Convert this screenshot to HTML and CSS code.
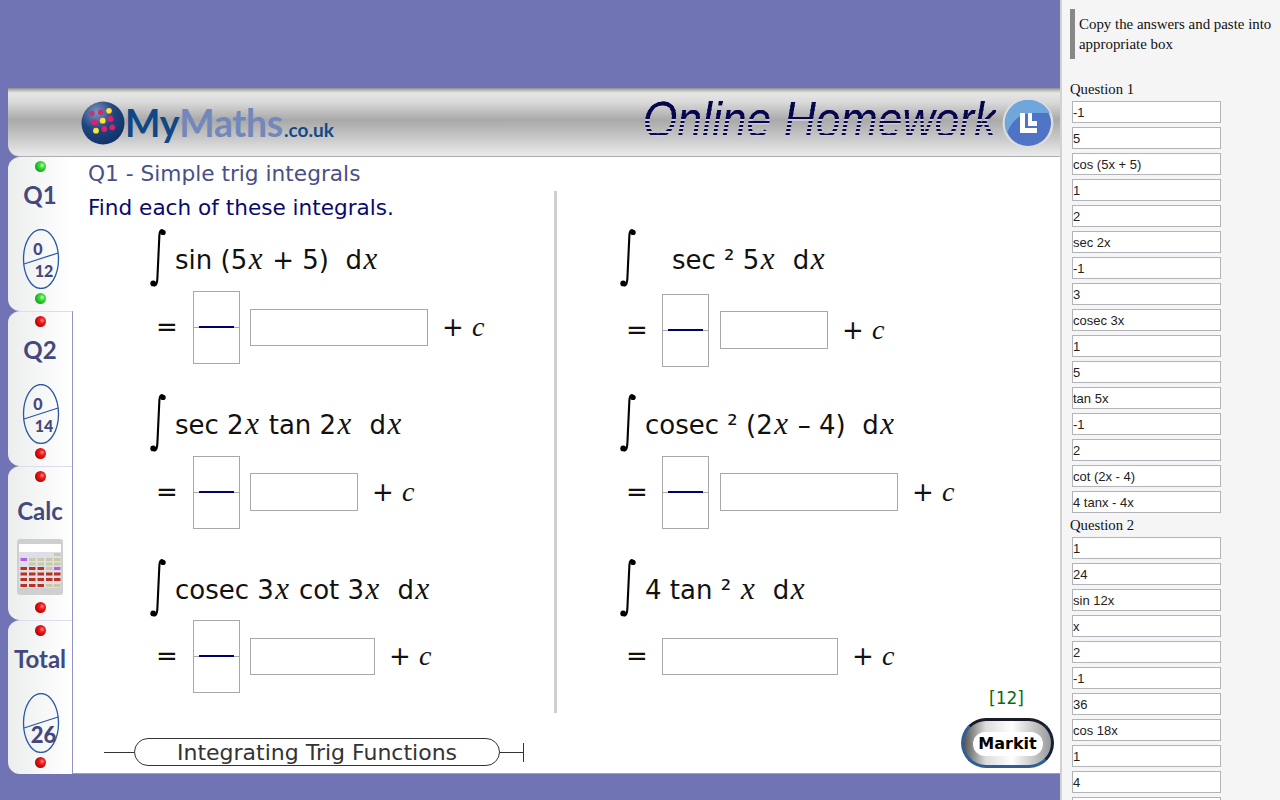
FILE: index.html
```html
<!DOCTYPE html>
<html lang="en">
<head>
<meta charset="utf-8">
<title>Online Homework</title>
<link rel="stylesheet" href="styles.css">
</head>
<body>
<svg class="defs" width="0" height="0" aria-hidden="true">
  <defs>
    <radialGradient id="ledRed" cx="0.65" cy="0.4" r="0.7"><stop offset="0" stop-color="#ff8a8a"/><stop offset="0.35" stop-color="#ee1c1c"/><stop offset="1" stop-color="#a80000"/></radialGradient>
    <radialGradient id="ledGreen" cx="0.65" cy="0.4" r="0.7"><stop offset="0" stop-color="#c8ffb8"/><stop offset="0.35" stop-color="#3fdc3a"/><stop offset="1" stop-color="#129a1c"/></radialGradient>
    <radialGradient id="ball" cx="0.35" cy="0.25" r="0.9"><stop offset="0" stop-color="#7f93bd"/><stop offset="0.45" stop-color="#1f4580"/><stop offset="1" stop-color="#0c2c60"/></radialGradient>
    <symbol id="integral" viewBox="0 0 16 60">
      <path d="M13.6 4.2C12.6 1 10 1.4 9.4 7L7.4 50C7 58 4.6 59 2.6 55.6" fill="none" stroke="#000" stroke-width="2.1"/>
      <circle cx="13" cy="4.4" r="2.7"/><circle cx="3.2" cy="55.4" r="2.9"/>
    </symbol>
    <symbol id="led-red" viewBox="0 0 11 11"><circle cx="5.5" cy="5.5" r="5.5" fill="url(#ledRed)"/></symbol>
    <symbol id="led-green" viewBox="0 0 11 11"><circle cx="5.5" cy="5.5" r="5.5" fill="url(#ledGreen)"/></symbol>
  </defs>
</svg>
<main class="main">
  <div class="stage">
    <header class="banner">
      <div class="logo">
        <svg class="logo-ball" viewBox="0 0 44 44" aria-hidden="true">
          <circle cx="22" cy="22" r="21.5" fill="url(#ball)"/>
          <circle cx="11" cy="12.3" r="2.6" fill="#b8386f"/><circle cx="19.7" cy="11.3" r="2.7" fill="#c92c70"/><circle cx="28" cy="9.7" r="2.8" fill="#ffe23a"/>
          <circle cx="13.7" cy="21.3" r="2.9" fill="#e0206a"/><circle cx="21.7" cy="19.7" r="2.9" fill="#ffe23a"/><circle cx="29.7" cy="18" r="2.9" fill="#e0206a"/>
          <circle cx="15" cy="29.7" r="2.9" fill="#ffe23a"/><circle cx="23.3" cy="28" r="2.9" fill="#e0206a"/><circle cx="31.3" cy="26.3" r="2.9" fill="#e0206a"/>
        </svg>
        <span class="logo-my">My</span><span class="logo-maths">Maths</span><span class="logo-tld">.co.uk</span>
      </div>
      <div class="brand">
        <span class="brand-text">Online Homework</span>
        <svg class="brand-badge" viewBox="0 0 52 52" aria-hidden="true">
          <circle cx="26" cy="26" r="25.5" fill="#dcdcdc"/>
          <circle cx="26" cy="26" r="23" fill="#4f74c6"/>
          <path d="M26 3A23 23 0 0 0 5 36C10 24 18 16 30 16L48 16A23 23 0 0 0 26 3Z" fill="#6fa6dc"/>
          <path d="M18 16H23V31H35V36H18ZM26 16H30V24H35V29H26Z" fill="#fff"/>
        </svg>
      </div>
    </header>
    <div class="board">
      <nav class="tabs">
        <div class="tab tab-active">
          <svg class="led"><use href="#led-green"/></svg>
          <div class="tab-label">Q1</div>
          <svg class="oval" viewBox="0 0 38 60"><ellipse cx="19" cy="30" rx="17.5" ry="29.5" class="oval-ring"/><path d="M2 35L36 24" class="oval-ring"/><text x="16" y="26" class="oval-text">0</text><text x="22" y="48" class="oval-text">12</text></svg>
          <svg class="led led-end"><use href="#led-green"/></svg>
        </div>
        <div class="tab">
          <svg class="led"><use href="#led-red"/></svg>
          <div class="tab-label">Q2</div>
          <svg class="oval" viewBox="0 0 38 60"><ellipse cx="19" cy="30" rx="17.5" ry="29.5" class="oval-ring"/><path d="M2 35L36 24" class="oval-ring"/><text x="16" y="26" class="oval-text">0</text><text x="22" y="48" class="oval-text">14</text></svg>
          <svg class="led led-end"><use href="#led-red"/></svg>
        </div>
        <div class="tab tab-calc">
          <svg class="led"><use href="#led-red"/></svg>
          <div class="tab-label tab-label-calc">Calc</div>
          <svg class="calc" viewBox="0 0 46 56" aria-hidden="true">
            <rect width="46" height="56" rx="3" fill="#cfcfd2"/>
            <rect x="2" y="5" width="42" height="8" fill="#fff"/>
            <rect x="2" y="13" width="42" height="36" fill="#dedee8"/>
            <g fill="#c9c9a4">
              <rect x="37" y="14" width="6.5" height="3"/>
              <rect x="12" y="19" width="6.5" height="3"/><rect x="20.5" y="19" width="6.5" height="3"/><rect x="29" y="19" width="6.5" height="3"/><rect x="37" y="19" width="6.5" height="3"/>
              <rect x="12" y="23.500" width="6.5" height="3"/><rect x="20.5" y="23.500" width="6.5" height="3"/><rect x="29" y="23.500" width="6.5" height="3"/><rect x="37" y="23.500" width="6.5" height="3"/>
              <rect x="29" y="28" width="6.5" height="3"/><rect x="29" y="45" width="6.5" height="3"/><rect x="37" y="45" width="6.5" height="3"/>
            </g>
            <g fill="#b8321f">
              <rect x="3.500" y="28" width="6.5" height="3"/><rect x="12" y="28" width="6.5" height="3"/><rect x="20.5" y="28" width="6.5" height="3"/>
              <rect x="3.500" y="33.500" width="6.5" height="3"/><rect x="12" y="33.500" width="6.5" height="3"/><rect x="20.5" y="33.500" width="6.5" height="3"/><rect x="29" y="33.500" width="6.5" height="3"/><rect x="37" y="33.500" width="6.5" height="3"/>
              <rect x="3.500" y="39" width="6.5" height="3"/><rect x="12" y="39" width="6.5" height="3"/><rect x="20.5" y="39" width="6.5" height="3"/><rect x="29" y="39" width="6.5" height="3"/><rect x="37" y="39" width="6.5" height="3"/>
              <rect x="3.500" y="45" width="6.5" height="3"/><rect x="12" y="45" width="6.5" height="3"/><rect x="20.5" y="45" width="6.5" height="3"/>
            </g>
            <g fill="#b45ce8"><rect x="3.500" y="19" width="6.5" height="3"/><rect x="37" y="28" width="6.5" height="3"/></g>
          </svg>
          <svg class="led led-calc-end"><use href="#led-red"/></svg>
        </div>
        <div class="tab tab-total">
          <svg class="led"><use href="#led-red"/></svg>
          <div class="tab-label">Total</div>
          <svg class="oval" viewBox="0 0 38 60"><ellipse cx="19" cy="30" rx="17.5" ry="29.5" class="oval-ring"/><path d="M2 35L36 24" class="oval-ring"/><text x="21.500" y="50" class="oval-text oval-text-lg">26</text></svg>
          <svg class="led led-end"><use href="#led-red"/></svg>
        </div>
      </nav>
      <section class="content">
        <div class="columns">
          <div class="col col-left">
            <h1 class="q-title">Q1 - Simple trig integrals</h1>
            <p class="q-intro">Find each of these integrals.</p>
            <div class="problem">
              <div class="expr"><svg class="int"><use href="#integral"/></svg><span class="expr-text">sin (5<i>x</i> + 5)&nbsp; d<i>x</i></span></div>
              <div class="answer"><span class="eq">=</span><span class="frac"><span class="frac-bar"></span></span><span class="box box-short w178"></span><span class="plus">+ <i>c</i></span></div>
            </div>
            <div class="problem">
              <div class="expr"><svg class="int"><use href="#integral"/></svg><span class="expr-text">sec 2<i>x</i> tan 2<i>x</i>&nbsp; d<i>x</i></span></div>
              <div class="answer"><span class="eq">=</span><span class="frac"><span class="frac-bar"></span></span><span class="box w108"></span><span class="plus">+ <i>c</i></span></div>
            </div>
            <div class="problem problem-last">
              <div class="expr"><svg class="int"><use href="#integral"/></svg><span class="expr-text">cosec 3<i>x</i> cot 3<i>x</i>&nbsp; d<i>x</i></span></div>
              <div class="answer answer-up"><span class="eq">=</span><span class="frac"><span class="frac-bar"></span></span><span class="box box-short w125"></span><span class="plus">+ <i>c</i></span></div>
            </div>
          </div>
          <div class="divider"></div>
          <div class="col col-right">
            <div class="problem">
              <div class="expr"><svg class="int"><use href="#integral"/></svg><span class="expr-text expr-indent">sec ² 5<i>x</i>&nbsp; d<i>x</i></span></div>
              <div class="answer answer-down"><span class="eq">=</span><span class="frac"><span class="frac-bar"></span></span><span class="box w108"></span><span class="plus">+ <i>c</i></span></div>
            </div>
            <div class="problem">
              <div class="expr"><svg class="int"><use href="#integral"/></svg><span class="expr-text">cosec ² (2<i>x</i> – 4)&nbsp; d<i>x</i></span></div>
              <div class="answer"><span class="eq">=</span><span class="frac"><span class="frac-bar"></span></span><span class="box w178"></span><span class="plus">+ <i>c</i></span></div>
            </div>
            <div class="problem problem-last">
              <div class="expr"><svg class="int"><use href="#integral"/></svg><span class="expr-text">4 tan ² <i>x</i>&nbsp; d<i>x</i></span></div>
              <div class="answer answer-up"><span class="eq">=</span><span class="box box-short w176"></span><span class="plus">+ <i>c</i></span></div>
            </div>
            <div class="marks">[12]</div>
          </div>
        </div>
        <footer class="foot">
          <div class="topic"><span class="topic-line"></span><span class="topic-pill">Integrating Trig Functions</span><span class="topic-line topic-end"></span></div>
          <div class="markit"><span class="markit-inner">Markit</span></div>
        </footer>
      </section>
    </div>
  </div>
</main>
<aside class="side">
  <blockquote class="note">Copy the answers and paste into appropriate box</blockquote>
  <div class="q-label">Question 1</div>
  <div class="ans">-1</div><div class="ans">5</div><div class="ans">cos (5x + 5)</div><div class="ans">1</div>
  <div class="ans">2</div><div class="ans">sec 2x</div><div class="ans">-1</div><div class="ans">3</div>
  <div class="ans">cosec 3x</div><div class="ans">1</div><div class="ans">5</div><div class="ans">tan 5x</div>
  <div class="ans">-1</div><div class="ans">2</div><div class="ans">cot (2x - 4)</div><div class="ans">4 tanx - 4x</div>
  <div class="q-label">Question 2</div>
  <div class="ans">1</div><div class="ans">24</div><div class="ans">sin 12x</div><div class="ans">x</div>
  <div class="ans">2</div><div class="ans">-1</div><div class="ans">36</div><div class="ans">cos 18x</div>
  <div class="ans">1</div><div class="ans">4</div><div class="ans"></div>
</aside>
</body>
</html>
```
FILE: styles.css
```css
* { box-sizing: border-box; }
html, body { margin: 0; height: 800px; overflow: hidden; }
body { display: flex; font-family: "DejaVu Sans", sans-serif; background: #f5f5f5; }
.defs { position: absolute; }
.main { width: 1060px; height: 800px; flex: none; background: #7074b4; padding: 88px 0 0 8px; }
.stage { height: 686px; display: flex; flex-direction: column; background: #7074b4; }

.banner { height: 69px; flex: none; display: flex; align-items: center; justify-content: space-between; padding: 0 6px 0 73px; border-bottom: 1px solid #aeaeb4; border-bottom-left-radius: 12px;
  background: linear-gradient(#8d8d8d 0, #b8b8b8 2px, #e6e6e6 5px, #dadada 14px, #a9a9a9 32px, #c8c8c8 50px, #e8e8e8 66px); }
.logo { display: flex; align-items: baseline; height: 44px; margin-top: 1px; }
.logo-ball { width: 44px; height: 44px; align-self: center; }
.logo-my, .logo-maths { font: 700 37.5px/44px Lato, sans-serif; letter-spacing: -0.3px; }
.logo-my { color: #0f4884; }
.logo-maths { color: #7288bb; }
.logo-tld { font: 700 19px/44px Lato, sans-serif; color: #134a86; margin-left: 1px; }
.brand { display: flex; align-items: center; margin-top: 1px; }
.brand-text { font: italic 400 50px/46px "Liberation Sans", sans-serif; color: transparent; transform: scaleX(0.89); transform-origin: right center; margin: -5px 0 0 -44px; -webkit-background-clip: text; background-clip: text;
  background-image: linear-gradient(#06064e 0, #06064e 21px, transparent 21px), repeating-linear-gradient(#06064e 0, #06064e 2px, #c9c9d4 2px, #c9c9d4 4px); }
.brand-badge { width: 52px; height: 52px; margin-left: 6px; }

.board { flex: 1; display: flex; min-height: 0; }
.tabs { width: 65px; flex: none; display: flex; flex-direction: column; }
.tab { height: 155px; display: flex; flex-direction: column; align-items: center; padding: 4px 0 0; border-right: 1px solid #8f93c9; border-top: 1px solid #dcdcec; border-radius: 12px 0 0 12px; background: linear-gradient(90deg, #eceeee, #fff); }
.tab-active { border-right-color: #fff; border-top: 0; height: 154px; }
.tab-calc, .tab-total { height: 154px; }
.led { width: 11px; height: 11px; flex: none; }
.led-end { margin-top: 4px; }
.led-calc-end { margin-top: 7px; }
.tab-label { height: 30px; margin-top: 8px; font: 700 24px/30px Lato, sans-serif; color: #44487f; }
.tab-label-calc { margin-top: 14px; }
.oval { width: 38px; height: 60px; margin: 19px 0 0 2px; flex: none; }
.oval-ring { fill: none; stroke: #2a58a6; stroke-width: 1.3; }
.oval-text { font: 900 16px Lato, sans-serif; fill: #44487f; text-anchor: middle; }
.oval-text-lg { font-size: 22px; }
.calc { width: 46px; height: 56px; margin-top: 13px; flex: none; }

.content { flex: 1; background: #fff; display: flex; flex-direction: column; min-width: 0; }
.columns { height: 556px; display: flex; flex: none; }
.col { display: flex; flex-direction: column; }
.col-left { width: 481px; padding-left: 15px; }
.col-right { flex: 1; padding: 71px 36px 0 63px; }
.divider { width: 3px; margin-top: 34px; background: #cfcfcf; flex: none; }
.q-title { margin: 4px 0 0; font: 400 21.7px/26px "DejaVu Sans", sans-serif; color: #4a4f88; }
.q-intro { margin: 8px 0 7px; font: 400 21.6px/26px "DejaVu Sans", sans-serif; color: #0a0a6e; }
.col-left .problem { margin-left: 62px; }
.problem { height: 165px; flex: none; }
.problem-last { height: 125px; }
.expr { height: 60px; display: flex; align-items: center; }
.int { width: 16px; height: 60px; flex: none; }
.expr-text { margin-left: 9px; font-size: 26px; line-height: 32px; margin-top: 2px; white-space: pre; color: #111; }
.expr-indent { margin-left: 36px; }
.expr-text i { font: italic 400 31px/32px "Liberation Serif", serif; margin: 0 1.5px; }
.plus i { font: italic 400 28px/32px "Liberation Serif", serif; }
.answer { margin-top: 3px; display: flex; align-items: center; min-height: 73px; font-size: 26px; color: #111; }
.answer-up { margin-top: 2px; }
.answer-down { margin-top: 6px; }
.eq { width: 43px; padding-left: 6px; flex: none; margin-bottom: 2px; }
.col-right .eq { width: 42px; }
.frac { width: 47px; height: 73px; border: 1px solid #a8a8a8; position: relative; margin-right: 10px; flex: none; background: linear-gradient(transparent 35px, #a8a8a8 35px, #a8a8a8 36px, transparent 36px); }
.col-right .frac { margin-right: 11px; }
.frac-bar { position: absolute; left: 5px; right: 5px; top: 34px; height: 2px; background: #00006e; }
.box { height: 38px; border: 1px solid #a8a8a8; flex: none; margin: 0 14px 1px 0; background: #fff; }
.box-short { height: 37px; margin-bottom: 0; }
.w178 { width: 178px; }
.w108 { width: 108px; }
.w125 { width: 125px; }
.w176 { width: 176px; }
.plus { white-space: pre; margin-bottom: 2px; }
.marks { margin-top: auto; margin-bottom: 5px; text-align: right; font-size: 17px; line-height: 20px; color: #0b6b0b; }

.foot { flex: 1; display: flex; align-items: flex-start; justify-content: space-between; padding: 0 6px 0 31px; border-bottom: 1px solid #9a9dc8; }
.topic { display: flex; align-items: center; margin-top: 25px; height: 28px; }
.topic-line { width: 30px; height: 1px; background: #333; }
.topic-end { width: 24px; position: relative; }
.topic-end::after { content: ""; position: absolute; right: 0; top: -9px; width: 1px; height: 19px; background: #333; }
.topic-pill { width: 366px; height: 28px; border: 1px solid #333; border-radius: 14px; text-align: center; font-size: 22px; line-height: 28px; color: #333; }
.markit { width: 93px; height: 50px; margin-top: 5px; border-radius: 25px; border: 3px solid #2f5f96; border-top-color: #1a1a2a; border-right-color: #14203c; padding-top: 2px; display: flex; align-items: center; justify-content: center;
  background: linear-gradient(90deg, #555 0, #ddd 25%, #fff 55%, #999 100%); }
.markit-inner { width: 70px; height: 24px; border-radius: 12px; background: #fff; text-align: center; font-weight: 700; font-size: 16px; line-height: 24px; color: #000; }

.side { flex: 1; height: 800px; overflow: hidden; background: #f5f5f5; border-left: 2px solid #d2d2d2; padding: 9px 0 0 8px; font-family: "Liberation Serif", serif; }
.note { margin: 0 0 22px; height: 50px; border-left: 5px solid #888; padding: 5px 0 0 4px; font-size: 14.9px; line-height: 20px; color: #111; }
.q-label { font-size: 14.7px; line-height: 17px; margin-bottom: 3px; color: #111; }
.ans { width: 149px; height: 22px; margin: 0 0 4px 2px; border: 1px solid #b3b3ba; background: #fff; padding-left: 0; font: 13px/21px "Liberation Sans", sans-serif; color: #222; }
```
